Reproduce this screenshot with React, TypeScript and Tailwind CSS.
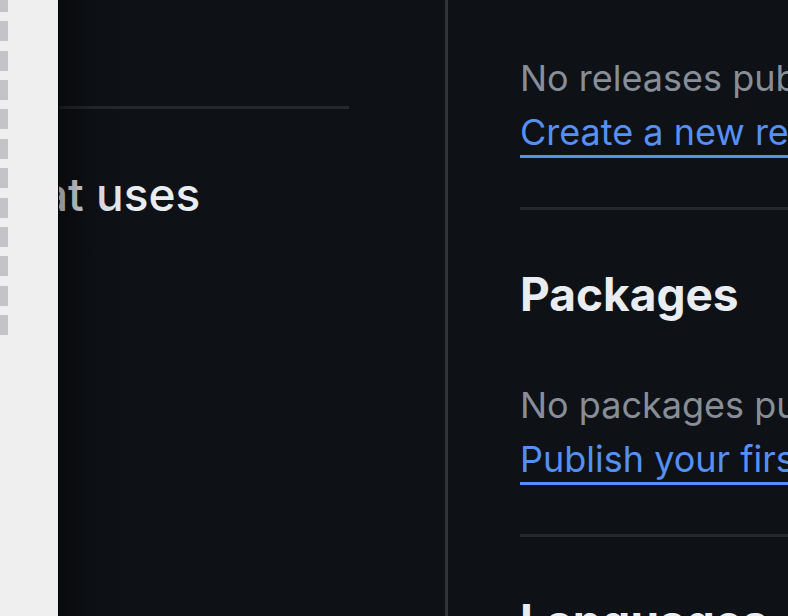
const marks = Array.from({ length: 12 }, (_, i) => i);

function Heading({ children }: { children: string }) {
  return <h2 className="pt-[52px] pb-px text-[46px] leading-[64px] font-bold text-[#e9edf2]">{children}</h2>;
}

function Details({ note, link }: { note: string; link: string }) {
  return (
    <div className="border-b-[3px] border-[#25282d] pt-[51px] pb-[49px] text-[36px] leading-[54px] font-normal text-[#888e97]">
      <p>{note}</p>
      <a href="#" className="block h-[53px] w-fit border-b-[3px] border-[#5590f5] text-[#5590f5]">{link}</a>
    </div>
  );
}

export default function App() {
  return (
    <div className="flex h-screen overflow-hidden bg-[#0e1116] font-['Inter',sans-serif] whitespace-nowrap">
      <aside className="relative z-10 w-[58px] shrink-0 bg-[#efefef]">
        <div className="flex h-[335px] w-2 flex-col justify-between">
          {marks.map((i) => (
            <span key={i} className={i === 0 ? "h-3 bg-[#c4c3c8]" : "h-5 bg-[#c4c3c8]"} />
          ))}
        </div>
        <div className="pointer-events-none absolute inset-y-0 left-full w-[72px] border-l border-black bg-linear-to-r from-black/40 via-black/10 to-transparent" />
      </aside>
      <main className="w-[387px] shrink-0">
        <div className="mr-24 h-[109px] border-b-[3px] border-[#25282d]" />
        <h1 className="-ml-4 pt-[53px] text-[46px] leading-[64px] font-medium text-[#e9edf2]">at uses</h1>
      </main>
      <aside className="min-w-0 flex-1 overflow-hidden border-l-[3px] border-[#303338] pl-[72px]">
        <section>
          <Details note="No releases published" link="Create a new release" />
        </section>
        <section>
          <Heading>Packages</Heading>
          <Details note="No packages published" link="Publish your first package" />
        </section>
        <section>
          <Heading>Languages</Heading>
        </section>
      </aside>
    </div>
  );
}
